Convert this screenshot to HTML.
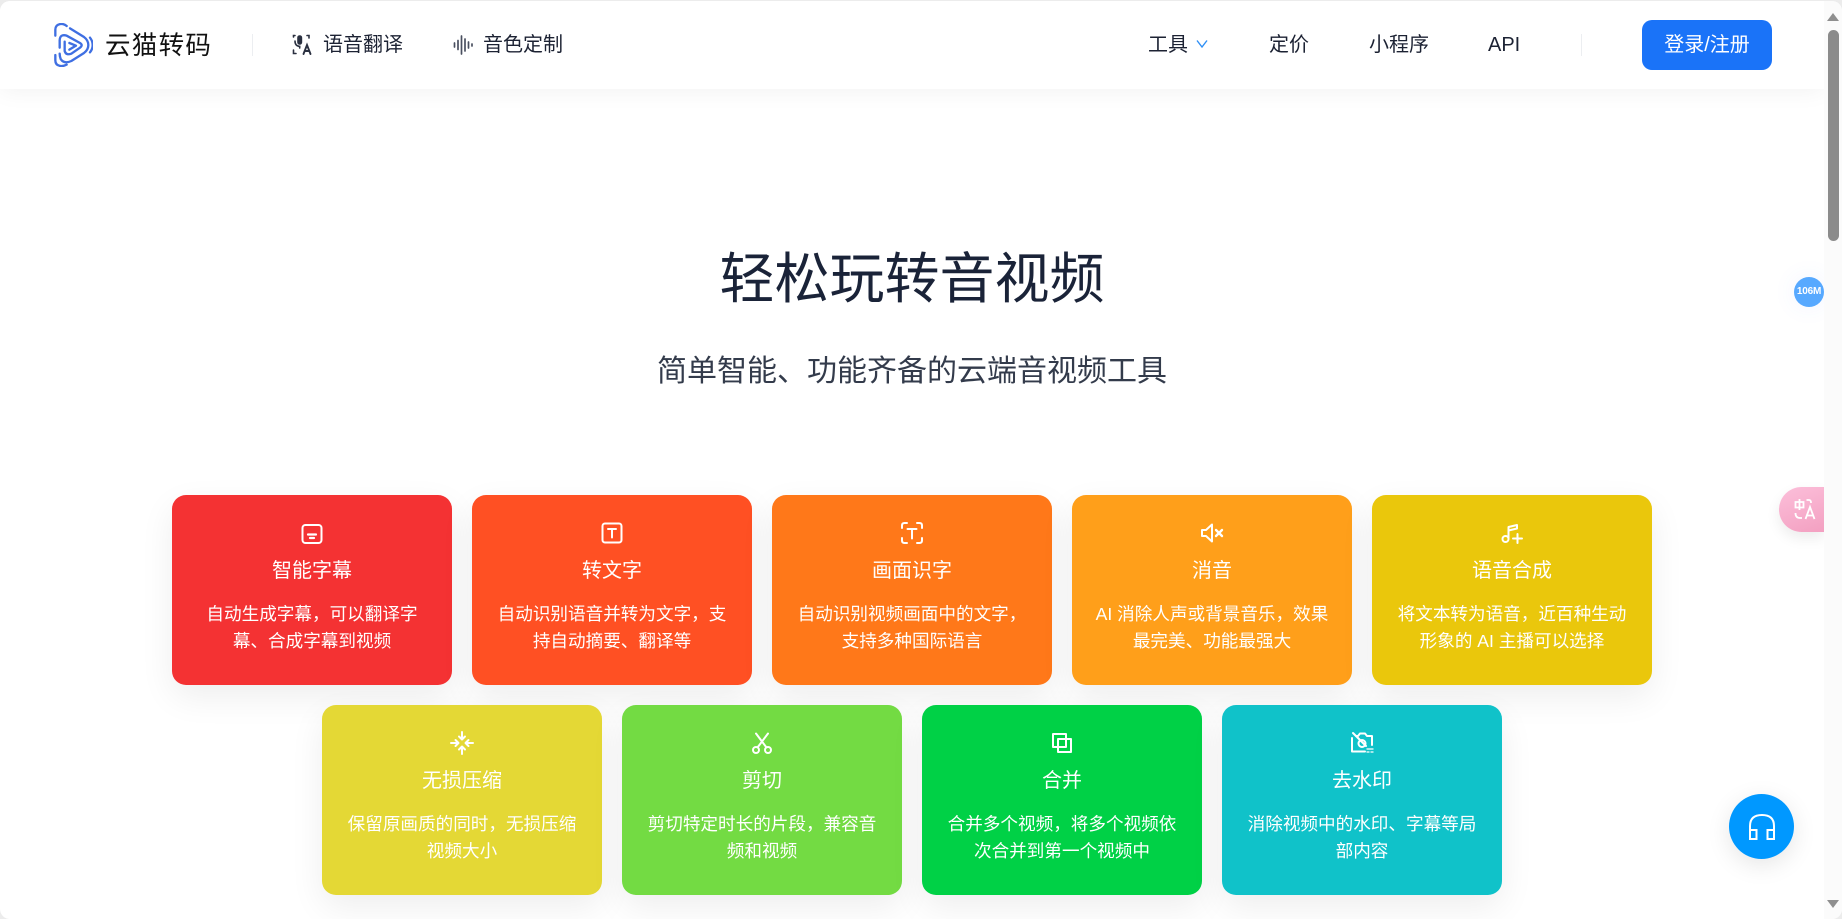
<!DOCTYPE html>
<html lang="zh-CN">
<head>
<meta charset="utf-8">
<title>云猫转码</title>
<style>
*{box-sizing:border-box;margin:0;padding:0}
html,body{width:1842px;height:919px;overflow:hidden;background:#ececec}
body{font-family:"Liberation Sans","Noto Sans CJK SC",sans-serif;position:relative}
#win{position:absolute;left:0;top:1px;width:1842px;height:918px;background:#fff;border-radius:10px;overflow:hidden}
.a{position:absolute;white-space:nowrap}
#hd{position:absolute;left:0;top:0;width:1824px;height:88px;background:#fff;box-shadow:0 2px 22px rgba(0,0,0,.055);z-index:2}
.nav{position:absolute;top:29px;font-size:20px;line-height:30px;color:#1c2233;white-space:nowrap}
.sep{position:absolute;top:33px;width:1px;height:22px;background:#eceef1}
#btn{position:absolute;left:1642px;top:19px;width:130px;height:50px;background:#1a73f8;border-radius:10px;color:#fff;font-size:20px;line-height:51px;text-align:center}
h1{position:absolute;left:0;width:1824px;top:240px;text-align:center;font-size:55px;line-height:76px;font-weight:400;color:#1a2338}
h2{position:absolute;left:0;width:1824px;top:349px;text-align:center;font-size:30px;line-height:44px;font-weight:400;color:#333b4b}
.c{position:absolute;width:280px;height:190px;border-radius:14px;color:#fff;text-align:center;box-shadow:0 12px 34px rgba(0,0,0,.07)}
.c svg{position:absolute;left:128px;top:26px;width:24px;height:24px;fill:none;stroke:#fff;stroke-width:2;stroke-linecap:round;stroke-linejoin:round}
.c b{position:absolute;left:0;width:280px;top:60px;font-weight:400;font-size:20px;line-height:32px}
.c p{position:absolute;left:0;width:280px;top:106px;font-size:17.6px;line-height:27px;white-space:nowrap}
#sb{position:absolute;left:1824px;top:0;width:18px;height:918px;background:#fbfbfb;z-index:3}
#th{position:absolute;left:4px;top:29px;width:11px;height:211px;background:#8b8b8b;border-radius:6px}
</style>
</head>
<body>
<div id="win">
  <div id="hd">
    <svg class="a" style="left:54px;top:22px" width="39" height="44" viewBox="0 0 117 132" fill="none" stroke="#3f6fe2" stroke-width="7" stroke-linecap="round" stroke-linejoin="round">
      <path d="M4 38V20Q4 5 20 3Q30 2 38 9"/>
      <path d="M48 16L90 42Q103 52 103 66Q103 80 90 90L52 114Q30 124 20 108Q17 100 17 92"/>
      <path d="M108 44Q116 54 116 66Q116 78 108 88"/>
      <path d="M4 96V112Q4 127 20 129Q29 130 38 125"/>
      <path d="M17 74V52Q18 32 38 38L78 60Q88 66 78 74L52 92Q36 98 32 84V56"/>
      <path d="M46 60L66 68L46 80"/>
    </svg>
    <div class="nav" style="left:105px;top:27px;font-size:25.5px;line-height:36px;color:#111;letter-spacing:1.300px">云猫转码</div>
    <div class="sep" style="left:252px"></div>
    <svg class="a" style="left:292px;top:33px" width="22" height="22" viewBox="0 0 22 22" fill="none" stroke="#2a3040" stroke-width="1.600" stroke-linecap="round">
      <rect x="6" y="2" width="3.400" height="8" rx="1.700" fill="#2a3040"/>
      <path d="M3 7Q3 12 7.700 12.400V14"/><path d="M1.500 3V1.500H3"/><path d="M1.500 16V19.500H4"/><path d="M15 1.500H17V4"/>
      <path d="M11.500 20L15 11L18.500 20M12.800 17H17.200" stroke-width="1.900"/>
    </svg>
    <div class="nav" style="left:323px">语音翻译</div>
    <svg class="a" style="left:453px;top:33px" width="20" height="22" viewBox="0 0 20 22" fill="none" stroke="#4a5060" stroke-width="1.700" stroke-linecap="round">
      <path d="M1.500 9V13M5 6.500V15.500M8.500 2V20M12 5V17M15.500 8V14M19 10V12"/>
    </svg>
    <div class="nav" style="left:483px">音色定制</div>
    <div class="nav" style="left:1148px">工具</div>
    <svg class="a" style="left:1195px;top:37px" width="14" height="12" viewBox="0 0 14 12" fill="none" stroke="#2f8ff5" stroke-width="1.400"><path d="M2 2.500L7 9L12 2.500"/></svg>
    <div class="nav" style="left:1269px">定价</div>
    <div class="nav" style="left:1369px">小程序</div>
    <div class="nav" style="left:1488px">API</div>
    <div class="sep" style="left:1581px"></div>
    <div id="btn">登录/注册</div>
  </div>

  <h1>轻松玩转音视频</h1>
  <h2>简单智能、功能齐备的云端音视频工具</h2>

  <div class="c" style="left:172px;top:494px;background:#f43233">
    <svg viewBox="0 0 24 24" style="top:27px"><rect x="2.500" y="3" width="19" height="18" rx="3"/><path d="M8 12.500H16M10 16H14" stroke-width="2.200"/></svg>
    <b>智能字幕</b><p>自动生成字幕，可以翻译字<br>幕、合成字幕到视频</p>
  </div>
  <div class="c" style="left:472px;top:494px;background:#ff5023">
    <svg viewBox="0 0 24 24"><rect x="2.500" y="2.500" width="19" height="19" rx="2.500"/><path d="M8 8H16M12 8V16.500"/></svg>
    <b>转文字</b><p>自动识别语音并转为文字，支<br>持自动摘要、翻译等</p>
  </div>
  <div class="c" style="left:772px;top:494px;background:#ff7819">
    <svg viewBox="0 0 24 24" stroke-width="1.800"><path d="M2 7V4.500Q2 2 4.500 2H7M17 2H19.500Q22 2 22 4.500V7M22 17V19.500Q22 22 19.500 22H17M7 22H4.500Q2 22 2 19.500V17"/><path d="M7.500 8H16.500M12 8V17.500"/></svg>
    <b>画面识字</b><p>自动识别视频画面中的文字，<br>支持多种国际语言</p>
  </div>
  <div class="c" style="left:1072px;top:494px;background:#ff9f1a">
    <svg viewBox="0 0 24 24"><path d="M2 9V15H6L12 20.500V3.500L6 9Z"/><path d="M16 9L22 15M22 9L16 15" stroke-width="2.400"/></svg>
    <b>消音</b><p>AI 消除人声或背景音乐，效果<br>最完美、功能最强大</p>
  </div>
  <div class="c" style="left:1372px;top:494px;background:#eac70c">
    <svg viewBox="0 0 24 24"><circle cx="5.500" cy="18" r="3"/><path d="M8.500 18V6L17 4V7.500L8.500 9.500"/><path d="M13 17.500H22M17.500 13V22"/></svg>
    <b>语音合成</b><p>将文本转为语音，近百种生动<br>形象的 AI 主播可以选择</p>
  </div>

  <div class="c" style="left:322px;top:704px;background:#e4d835">
    <svg viewBox="0 0 24 24" stroke-width="2.200"><path d="M12 1V8M9 5.500L12 8.500L15 5.500M12 23V16M9 18.500L12 15.500L15 18.500M1 12H8M5.500 9L8.500 12L5.500 15M23 12H16M18.500 9L15.500 12L18.500 15"/></svg>
    <b>无损压缩</b><p>保留原画质的同时，无损压缩<br>视频大小</p>
  </div>
  <div class="c" style="left:622px;top:704px;background:#73db43">
    <svg viewBox="0 0 24 24"><circle cx="6" cy="19" r="3"/><circle cx="18" cy="19" r="3"/><path d="M7.500 16.500L18 2.500M16.500 16.500L6 2.500"/></svg>
    <b>剪切</b><p>剪切特定时长的片段，兼容音<br>频和视频</p>
  </div>
  <div class="c" style="left:922px;top:704px;background:#00d146">
    <svg viewBox="0 0 24 24" stroke-linecap="square" stroke-linejoin="miter" stroke-width="2.200"><rect x="3" y="3" width="13" height="13"/><rect x="8" y="8" width="13" height="13"/></svg>
    <b>合并</b><p>合并多个视频，将多个视频依<br>次合并到第一个视频中</p>
  </div>
  <div class="c" style="left:1222px;top:704px;background:#10c2c9">
    <svg viewBox="0 0 24 24" stroke-width="1.500"><path d="M6 5H8L10 2.500H15L17 5H22V14M2 7V20.500H15"/><circle cx="12" cy="12.500" r="3.500"/><path d="M3 2L16 15"/><path d="M17 18H23M17 21H19M21 21H23" stroke-width="1.300"/></svg>
    <b>去水印</b><p>消除视频中的水印、字幕等局<br>部内容</p>
  </div>

  <div class="a" style="left:1794px;top:276px;width:30px;height:30px;border-radius:50%;background:#57a9ff;color:#fff;font-size:10px;font-weight:700;line-height:30px;text-align:center;box-shadow:0 0 24px rgba(80,120,255,.08);z-index:1;letter-spacing:-.2px">106M</div>
  <div class="a" style="left:1779px;top:486px;width:45px;height:45px;border-radius:23px 0 0 23px;background:linear-gradient(160deg,#fcbfda,#f3a0c1);box-shadow:0 6px 14px rgba(0,0,0,.08);z-index:1">
    <svg class="a" style="left:15px;top:11px" width="22" height="22" viewBox="0 0 22 22" fill="none" stroke="#fff" stroke-width="1.800"><path d="M1.500 4H9.500V9.500H1.500ZM5.500 1V12"/><path d="M12.500 2H15Q17 2 17 5M1.500 15Q1.500 20 6 20H8"/><path d="M11.500 21L16 9L20.500 21M13 17.500H19"/></svg>
  </div>
  <div class="a" style="left:1729px;top:793px;width:65px;height:65px;border-radius:50%;background:#0098ff;box-shadow:0 6px 24px rgba(0,0,0,.1);z-index:4">
    <svg class="a" style="left:19px;top:19px" width="28" height="28" viewBox="0 0 28 28" fill="none" stroke="#fff" stroke-width="2"><path d="M2 20V13Q2 2 14 2Q26 2 26 13V20"/><rect x="2" y="17" width="6.500" height="9"/><rect x="19.500" y="17" width="6.500" height="9"/></svg>
  </div>

  <div id="sb">
    <svg class="a" style="left:3px;top:12px" width="12" height="8" viewBox="0 0 12 8"><path d="M6 0L12 8H0Z" fill="#8f8f8f"/></svg>
    <div id="th"></div>
    <svg class="a" style="left:3px;top:899px" width="12" height="8" viewBox="0 0 12 8"><path d="M0 0H12L6 8Z" fill="#8f8f8f"/></svg>
  </div>
</div>
</body>
</html>
